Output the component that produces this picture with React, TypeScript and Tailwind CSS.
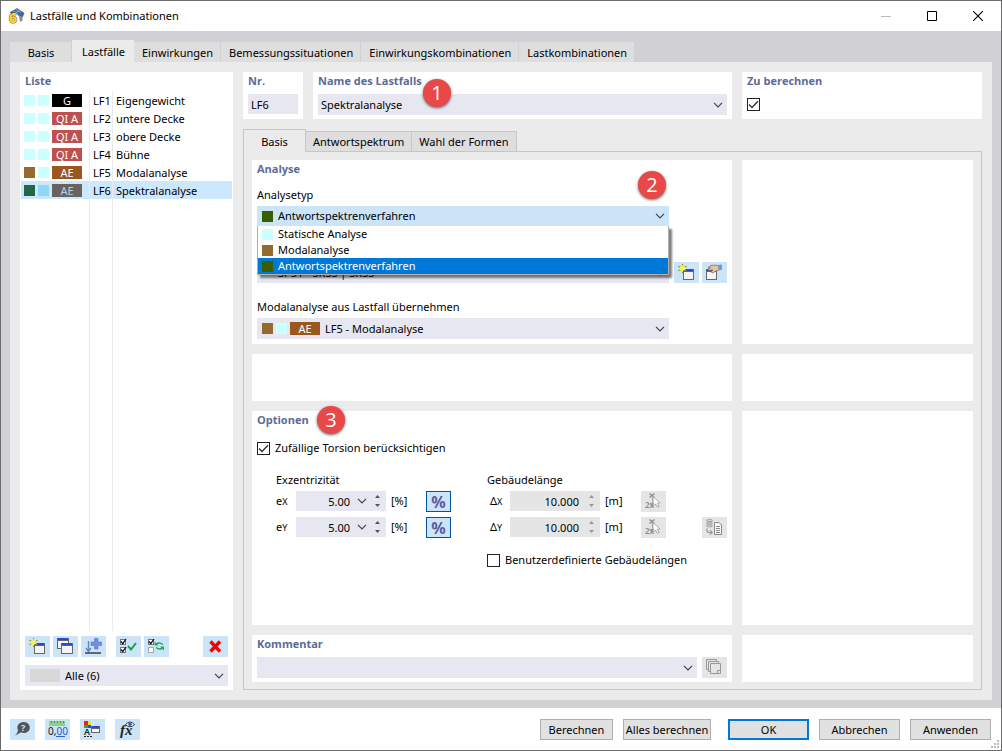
import { useState } from 'react';
import type { ReactNode } from 'react';
import clsx from 'clsx';

const MAIN_TABS = [
  'Basis',
  'Lastfälle',
  'Einwirkungen',
  'Bemessungssituationen',
  'Einwirkungskombinationen',
  'Lastkombinationen',
];

const SUB_TABS = ['Basis', 'Antwortspektrum', 'Wahl der Formen'];

const LOAD_CASES = [
  { id: 'LF1', name: 'Eigengewicht', type: 'bg-[#ccffff]', state: 'bg-[#ccffff]', badge: 'G', badgeStyle: 'bg-black text-white' },
  { id: 'LF2', name: 'untere Decke', type: 'bg-[#ccffff]', state: 'bg-[#ccffff]', badge: 'QI A', badgeStyle: 'bg-[#c0504d] text-white' },
  { id: 'LF3', name: 'obere Decke', type: 'bg-[#ccffff]', state: 'bg-[#ccffff]', badge: 'QI A', badgeStyle: 'bg-[#c0504d] text-white' },
  { id: 'LF4', name: 'Bühne', type: 'bg-[#ccffff]', state: 'bg-[#ccffff]', badge: 'QI A', badgeStyle: 'bg-[#c0504d] text-white' },
  { id: 'LF5', name: 'Modalanalyse', type: 'bg-[#966a2d]', state: 'bg-[#ccffff]', badge: 'AE', badgeStyle: 'bg-[#9c571f] text-white' },
  { id: 'LF6', name: 'Spektralanalyse', type: 'bg-[#236845]', state: 'bg-[#8fd6f7]', badge: 'AE', badgeStyle: 'bg-[#6a625c] text-[#b5d3ee]' },
];

const ANALYSIS_TYPES = [
  { name: 'Statische Analyse', color: 'bg-[#ccffff]' },
  { name: 'Modalanalyse', color: 'bg-[#966a2d]' },
  { name: 'Antwortspektrenverfahren', color: 'bg-[#375f00]' },
];

/* ---------- small building blocks ---------- */

function Card({ title, className, children }: { title?: string; className?: string; children?: ReactNode }) {
  return (
    <section className={clsx('relative bg-white px-[5px]', className)}>
      {title && <h2 className="h-[18px] font-['Open_Sans',sans-serif] font-bold leading-[18px] text-[#5b6b97]">{title}</h2>}
      {children}
    </section>
  );
}

function Chevron({ className }: { className?: string }) {
  return (
    <svg className={clsx('pointer-events-none shrink-0', className)} width="10" height="6" viewBox="0 0 10 6" fill="none" stroke="#444" strokeWidth="1.2">
      <path d="M1 .8 5 4.8 9 .8" />
    </svg>
  );
}

function Swatch({ color }: { color: string }) {
  return <span className={clsx('size-[11px] shrink-0', color)} />;
}

function SelectField({
  id,
  label,
  options,
  className,
  bg = 'bg-[#e7e7f2]',
  children,
}: {
  id: string;
  label: string;
  options: string[];
  className?: string;
  bg?: string;
  children?: ReactNode;
}) {
  return (
    <div className={clsx('relative flex items-center', bg, className)}>
      {children}
      <select id={id} aria-label={label} className="h-full min-w-0 flex-1 appearance-none bg-transparent pr-5 outline-none">
        {options.map((o) => (
          <option key={o}>{o}</option>
        ))}
      </select>
      <Chevron className="absolute right-1" />
    </div>
  );
}

function CheckBox({ id, label, defaultChecked }: { id: string; label: string; defaultChecked?: boolean }) {
  return (
    <span className="grid size-[13px] shrink-0">
      <input
        id={id}
        aria-label={label}
        type="checkbox"
        defaultChecked={defaultChecked}
        className="peer col-start-1 row-start-1 size-[13px] appearance-none border border-[#222] bg-white"
      />
      <svg className="pointer-events-none invisible col-start-1 row-start-1 peer-checked:visible" width="13" height="13" viewBox="0 0 13 13" fill="none" stroke="#333" strokeWidth="1.4">
        <path d="M2 6.5 5 9.5 11 3.2" />
      </svg>
    </span>
  );
}

function ToolButton({ label, disabled, className, children }: { label: string; disabled?: boolean; className?: string; children: ReactNode }) {
  return (
    <button
      type="button"
      title={label}
      aria-label={label}
      disabled={disabled}
      className={clsx('h-[21px] w-[25px] shrink-0', disabled ? 'bg-[#e5e5e5]' : 'bg-[#cce4f7]', className)}
    >
      <svg width="25" height="21" viewBox="0 0 25 21" fill="none">
        {children}
      </svg>
    </button>
  );
}

function Spinner({ disabled }: { disabled?: boolean }) {
  return (
    <svg className="shrink-0" width="5" height="12" viewBox="0 0 5 12" fill={disabled ? '#999' : '#555'}>
      <path d="M0 3 2.5 0 5 3ZM0 9 2.5 12 5 9Z" />
    </svg>
  );
}

function NumberField({ id, value, disabled }: { id: string; value: string; disabled?: boolean }) {
  return (
    <div className={clsx('flex h-5 w-[90px] items-center pr-[6px]', disabled ? 'bg-[#e5e5e5]' : 'bg-[#e7e7f2]')}>
      <input id={id} defaultValue={value} disabled={disabled} className="h-full min-w-0 flex-1 bg-transparent text-right outline-none" />
      {!disabled && <Chevron className="ml-[7px]" />}
      <span className={disabled ? 'ml-[10px]' : 'ml-[8px]'}>
        <Spinner disabled={disabled} />
      </span>
    </div>
  );
}

function Marker({ n, className }: { n: number; className: string }) {
  return (
    <span
      className={clsx(
        "absolute z-20 flex size-7 items-center justify-center rounded-full bg-[#e84848] font-['Open_Sans',sans-serif] text-[20px] leading-none text-white shadow-[0_1px_3px_rgba(0,0,0,0.6)]",
        className
      )}
    >
      {n}
    </span>
  );
}

/* ---------- icon drawings, 25x21 ---------- */

function MiniWindow({ x, y, w = 10, h = 9 }: { x: number; y: number; w?: number; h?: number }) {
  return (
    <g shapeRendering="crispEdges">
      <rect x={x} y={y} width={w + 1} height={h + 1} fill="#666" />
      <rect x={x + 1} y={y} width={w - 1} height="2" fill="#2c45e0" />
      <rect x={x + 1} y={y + 3} width={w - 1} height={h - 3} fill="#f4f4f4" />
    </g>
  );
}

function NewIcon() {
  return (
    <>
      <MiniWindow x={9} y={7} w={10} h={10} />
      <path d="M8.5 2v9M4.5 4.2l8 4.6M12.5 4.2l-8 4.6" stroke="#77772a" strokeWidth="1.1" />
      <path d="m8.5 2.6 1 2.3 2.7-.4-1.7 2 1.7 2-2.7-.4-1 2.3-1-2.3-2.7.4 1.7-2-1.7-2 2.7.4Z" fill="#ffff1e" />
    </>
  );
}

function CopyIcon() {
  return (
    <>
      <MiniWindow x={4} y={2} w={11} h={10} />
      <MiniWindow x={8} y={7} w={11} h={10} />
    </>
  );
}

function ImportIcon() {
  return (
    <>
      <path d="M13.5 2.5h3.5v3.5h3.5v3.5H17V13h-3.5V9.5H10V6h3.5Z" fill="#6f8fe0" stroke="#5874c8" strokeWidth=".6" />
      <path d="M7.5 5v10M5 12l2.5 3.5L10 12" stroke="#5c86c4" strokeWidth="1.4" />
      <path d="M4 17h16" stroke="#333" strokeWidth="1.4" />
    </>
  );
}

function TinyCheck({ y, checked = true }: { y: number; checked?: boolean }) {
  return (
    <>
      <rect x="4.5" y={y + 0.5} width="5" height="5" fill="#fff" stroke={checked ? '#777' : '#aaa'} />
      {checked && <path d={`M5 ${y + 2.5} 6.8 ${y + 4.6} 10 ${y}`} stroke="#111" strokeWidth="1.3" />}
    </>
  );
}

function DeleteIcon() {
  return <path d="M7.5 5.5 17 15.5M17 5.5 7.5 15.5" stroke="#f50000" strokeWidth="3.4" />;
}

function EditIcon() {
  return (
    <>
      <MiniWindow x={4} y={7} w={10} h={10} />
      <path d="M6 5.5 9 3.5l5-.5 3 1.5v3.5l-4 1.5-2 1.5-2-1 2-2-4.5.3-.5-1.3 2.5-1Z" fill="#e7c3a0" stroke="#7d6450" strokeWidth=".7" />
      <path d="M15.5 3 20 2.5v5l-2.5 1Z" fill="#6f9bd4" />
    </>
  );
}

function PickIcon() {
  return (
    <>
      <path d="m8.5 2.5 5 4M13.5 2.5l-5 4" stroke="#888" strokeWidth="1.2" />
      <path d="M11.5 5v7L9 13.5M14 13l4.5 2.5" stroke="#aaa" />
      <path d="m12 5.5 7 6.5-2.8.3 1.8 3-1.7.9-1.7-3.1L12 15Z" fill="#fff" stroke="#999" strokeWidth=".8" />
      <text x="4" y="17" fontSize="8" fontWeight="600" fill="#888">2x</text>
    </>
  );
}

function DatabaseIcon() {
  return (
    <>
      <g fill="#ccc" stroke="#999" strokeWidth=".8">
        <ellipse cx="7.5" cy="8.8" rx="3" ry="1.2" />
        <ellipse cx="7.5" cy="6.2" rx="3" ry="1.2" />
        <ellipse cx="7.5" cy="3.6" rx="3" ry="1.2" />
      </g>
      <path d="M5 11.5v2q0 2 2.5 2H10M8 13.2l2.2 2.3L8 17.6" stroke="#999" strokeWidth="1.2" />
      <path d="M12.5 5.5h4.5l2.5 2.5v9.5h-7z" fill="#f8f8f8" stroke="#888" />
      <path d="M14 9.5h4M14 11.5h4M14 13.5h4M14 15.5h4" stroke="#888" />
    </>
  );
}

function PagesIcon() {
  return (
    <g fill="#e5e5e5" stroke="#999">
      <path d="M4.5 2.5h10v10h-10z" />
      <path d="M6.5 4.5h10v10h-10z" />
      <path d="M8.5 6.5h10v10h-10z" />
      <path d="M15.5 16.5v-3h3" />
    </g>
  );
}

function PercentButton({ label }: { label: string }) {
  return (
    <button type="button" aria-label={label} className="ml-5 flex h-[21px] w-[25px] items-center justify-center border border-[#00559b] bg-[#cce4f7] text-[16px] font-bold leading-none text-[#5a5aa0]">
      %
    </button>
  );
}

function AppLogo() {
  return (
    <svg className="overflow-visible" width="16" height="16" viewBox="0 0 16 16">
      <path d="M2 4.5 9 .5l7 4.5-1.5 4-3.5-1L9 5.5 4 6Z" fill="#3e68a8" stroke="#39506e" strokeWidth=".6" />
      <path d="m5 3 5 2M8 1.5l5 3M12 2.5 7 5" stroke="#9cb9dd" strokeWidth=".7" />
      <path d="m11 7.5 3.5 1v4l-2.5 1.5Z" fill="#8a8a8a" />
      <text x="1" y="15" fontSize="14" fontWeight="700" fill="#ffd42e" stroke="#6e5a1a" strokeWidth="1" paintOrder="stroke">6</text>
    </svg>
  );
}

/* ---------- page parts ---------- */

function TitleBar() {
  return (
    <header className="flex h-[30px] items-center bg-white pl-[7px] pr-[18px] text-black">
      <AppLogo />
      <h1 className="ml-[6px] flex-1 font-normal">Lastfälle und Kombinationen</h1>
      <div className="flex items-center gap-9">
        <button type="button" aria-label="Minimieren">
          <svg width="10" height="10" viewBox="0 0 10 10" stroke="#bbb"><path d="M0 5.5h10" /></svg>
        </button>
        <button type="button" aria-label="Maximieren">
          <svg width="10" height="10" viewBox="0 0 10 10" fill="none" stroke="#000"><path d="M.5.5h9v9h-9z" /></svg>
        </button>
        <button type="button" aria-label="Schließen">
          <svg width="10" height="10" viewBox="0 0 10 10" stroke="#000" strokeWidth="1.1"><path d="m0 0 10 10M10 0 0 10" /></svg>
        </button>
      </div>
    </header>
  );
}

function LoadCaseList() {
  const [selected, setSelected] = useState('LF6');

  return (
    <aside className="flex w-[213px] shrink-0 flex-col bg-white">
      <h2 className="h-[19px] pl-[5px] font-['Open_Sans',sans-serif] font-bold leading-[18px] text-[#5b6b97]">Liste</h2>
      <div className="flex flex-1 px-px">
        <table className="w-full table-fixed border-separate border-spacing-0">
          <colgroup>
            <col className="w-[69px]" />
            <col className="w-[23px]" />
            <col />
          </colgroup>
          <tbody>
            {LOAD_CASES.map((lc) => (
              <tr key={lc.id} onClick={() => setSelected(lc.id)} className={clsx('h-[18px]', selected === lc.id && 'bg-[#cce8ff]')}>
                <td className="border-r border-[#ebebeb] p-0">
                  <div className="flex items-center gap-[3px] pl-[3px]">
                    <Swatch color={lc.type} />
                    <Swatch color={lc.state} />
                    <span className={clsx('h-[13px] w-[30px] text-center leading-[13px]', lc.badgeStyle)}>{lc.badge}</span>
                  </div>
                </td>
                <td className="border-r border-[#ebebeb] p-0 pl-[3px] pt-[2px] leading-4">{lc.id}</td>
                <td className="p-0 pl-[3px] pt-[2px] leading-4">{lc.name}</td>
              </tr>
            ))}
            <tr>
              <td className="border-r border-[#ebebeb] p-0" />
              <td className="border-r border-[#ebebeb] p-0" />
              <td className="p-0" />
            </tr>
          </tbody>
        </table>
      </div>
      <div className="mt-[5px] flex gap-[3px] px-[5px]">
        <ToolButton label="Neu"><NewIcon /></ToolButton>
        <ToolButton label="Kopieren"><CopyIcon /></ToolButton>
        <ToolButton label="Importieren"><ImportIcon /></ToolButton>
        <ToolButton label="Alle auswählen" className="ml-[7px]">
          <TinyCheck y={3} />
          <TinyCheck y={11} />
          <path d="m12 10 3 3.5L20 7" stroke="#13a04a" strokeWidth="2" />
        </ToolButton>
        <ToolButton label="Auswahl umkehren">
          <TinyCheck y={3} />
          <TinyCheck y={11} checked={false} />
          <path d="M19 8.5q-3.5-2.5-7-.5M12 11.5q3.5 2.5 7 .5" stroke="#2aa35a" strokeWidth="1.5" />
          <path d="M10.5 5.5v4h4zM20 14.5v-4h-4z" fill="#2aa35a" />
        </ToolButton>
        <ToolButton label="Löschen" className="ml-auto"><DeleteIcon /></ToolButton>
      </div>
      <SelectField id="filter" label="Filter" options={['Alle (6)']} className="mx-[5px] mb-1 mt-2 h-[21px] gap-[5px] pl-[5px]">
        <span className="h-[13px] w-[30px] shrink-0 bg-[#d8d8d8]" />
      </SelectField>
    </aside>
  );
}

function AnalysisCard() {
  const [type, setType] = useState('Antwortspektrenverfahren');

  return (
    <Card title="Analyse" className="pb-[5px]">
      <Marker n={2} className="left-[386px] top-[11px]" />
      <label htmlFor="analysetyp" className="mt-[9px] block h-4 leading-4">Analysetyp</label>
      <div className="relative mr-[58px] mt-[3px]">
        <SelectField id="analysetyp" label="Analysetyp" options={[type]} bg="bg-[#cce4f7]" className="h-5 gap-[5px] pl-[5px]">
          <Swatch color="bg-[#375f00]" />
        </SelectField>
        <ul role="listbox" aria-label="Analysetyp" className="absolute inset-x-0 top-full z-10 border border-t-0 border-[#b0b0b0] bg-white shadow-[3px_3px_2px_rgba(0,0,0,0.5)]">
          {ANALYSIS_TYPES.map((t) => (
            <li
              key={t.name}
              role="option"
              aria-selected={t.name === type}
              onClick={() => setType(t.name)}
              className={clsx('flex h-4 items-center gap-[5px] pl-1 leading-4', t.name === type && 'bg-[#0078d7] text-white')}
            >
              <Swatch color={t.color} />
              {t.name}
            </li>
          ))}
        </ul>
      </div>
      <div className="mt-9 flex">
        <SelectField id="spektral" label="Spektralanalyse-Einstellungen" options={['SP51 - SRSS | SRSS']} className="mr-[5px] h-[21px] flex-1 gap-[5px] pl-[5px]">
          <Swatch color="bg-[#ccffff]" />
        </SelectField>
        <ToolButton label="Neu" className="mr-[3px]"><NewIcon /></ToolButton>
        <ToolButton label="Bearbeiten"><EditIcon /></ToolButton>
      </div>
      <label htmlFor="modal" className="mt-4 block h-4 leading-4">Modalanalyse aus Lastfall übernehmen</label>
      <SelectField id="modal" label="Modalanalyse aus Lastfall übernehmen" options={['LF5 - Modalanalyse']} className="mr-[58px] mt-[3px] h-[21px] gap-[3px] pl-[5px]">
        <Swatch color="bg-[#966a2d]" />
        <Swatch color="bg-[#ccffff]" />
        <span className="mr-[2px] h-[13px] w-[30px] shrink-0 bg-[#9c571f] text-center leading-[13px] text-white">AE</span>
      </SelectField>
    </Card>
  );
}

function OptionsCard() {
  return (
    <Card title="Optionen">
      <Marker n={3} className="-top-[5px] left-[65px]" />
      <div className="mt-[11px] flex h-4 items-center gap-[5px]">
        <CheckBox id="torsion" label="Zufällige Torsion berücksichtigen" defaultChecked />
        <label htmlFor="torsion">Zufällige Torsion berücksichtigen</label>
      </div>
      <div className="mt-[14px] flex pl-[19px]">
        <div className="w-[211px] shrink-0">
          <h3 className="h-[21px] leading-5">Exzentrizität</h3>
          {['X', 'Y'].map((axis) => (
            <div key={axis} className="mb-[5px] flex h-[21px] items-start leading-5">
              <label htmlFor={`e-${axis}`} className="w-5">
                e<span className="text-[9px]">{axis}</span>
              </label>
              <NumberField id={`e-${axis}`} value="5.00" />
              <span className="ml-[5px] w-[15px]">[%]</span>
              <PercentButton label={`Prozent ${axis}`} />
            </div>
          ))}
        </div>
        <div className="flex-1">
          <h3 className="h-[21px] leading-5">Gebäudelänge</h3>
          {['X', 'Y'].map((axis) => (
            <div key={axis} className="mb-[5px] flex h-[21px] items-start leading-5">
              <label htmlFor={`d-${axis}`} className="w-[23px] pl-[3px]">
                Δ<span className="text-[9px]">{axis}</span>
              </label>
              <NumberField id={`d-${axis}`} value="10.000" disabled />
              <span className="ml-[5px] w-[36px]">[m]</span>
              <ToolButton label={`Länge ${axis} auswählen`} disabled><PickIcon /></ToolButton>
              {axis === 'Y' && (
                <ToolButton label="Importieren" disabled className="ml-auto"><DatabaseIcon /></ToolButton>
              )}
            </div>
          ))}
          <div className="mt-[14px] flex h-4 items-center gap-[5px]">
            <CheckBox id="custom" label="Benutzerdefinierte Gebäudelängen" />
            <label htmlFor="custom">Benutzerdefinierte Gebäudelängen</label>
          </div>
        </div>
      </div>
    </Card>
  );
}

function Footer() {
  const button = 'h-[21px] border border-[#adadad] bg-[#e1e1e1] text-center leading-[19px]';

  return (
    <footer className="relative flex h-[42px] items-center bg-white pl-[9px] pr-[10px]">
      <div className="flex flex-1 gap-[10px]">
        <ToolButton label="Hilfe">
          <path d="M13.5 3a6 5.5 0 1 1-2.5 10.3Q8 15 5 16.5 8 13.5 8 11A6 5.5 0 0 1 13.5 3Z" fill="#555" />
          <text x="11" y="12" fontSize="9" fontWeight="700" fill="#cce4f7">?</text>
        </ToolButton>
        <ToolButton label="Einheiten">
          <path d="M4 2h16v5H4z" fill="#8fd27f" />
          <path d="M6.5 2v2M9.5 2v2M12.5 2v2M15.5 2v2M18.5 2v2" stroke="#4d9a42" />
          <text x="3" y="16" fontSize="10" fill="#111">0,<tspan fill="#2463d8">00</tspan></text>
          <path d="M11 17.5h9" stroke="#2463d8" />
        </ToolButton>
        <ToolButton label="Darstellung">
          <path d="M4 2h4v4H4z" fill="#f02020" />
          <path d="M8 2h3v4H8z" fill="#f5e020" />
          <path d="M4 6h4v3H4z" fill="#20b030" />
          <path d="M8 6h3v3H8z" fill="#2050e0" />
          <text x="4" y="16" fontSize="9" fontWeight="600" fill="#222">A</text>
          <path d="M4 17.5h8" stroke="#222" strokeDasharray="2 1" />
          <MiniWindow x={11} y={7} w={8} h={6} />
        </ToolButton>
        <ToolButton label="Formel">
          <text x="5" y="16" fontSize="15" fontStyle="italic" fontWeight="700" fill="#222" className="font-['Liberation_Serif',serif]">fx</text>
          <path d="M10.5 5.5q4.5-5 9 0-4.5 4.5-9 0Z" fill="#fff" stroke="#334" />
          <circle cx="15" cy="5.2" r="1.8" fill="#3b56b8" />
        </ToolButton>
      </div>
      <div className="flex gap-[10px]">
        <button type="button" className={clsx(button, 'w-[73px]')}>Berechnen</button>
        <button type="button" className={clsx(button, 'mr-[7px] w-[88px] whitespace-nowrap')}>Alles berechnen</button>
        <button type="button" className="h-[21px] w-[81px] border-2 border-[#0078d7] bg-[#e1e1e1] leading-[17px]">OK</button>
        <button type="button" className={clsx(button, 'w-[81px]')}>Abbrechen</button>
        <button type="button" className={clsx(button, 'w-[81px]')}>Anwenden</button>
      </div>
      <svg className="absolute bottom-[2px] right-[2px]" width="8" height="8" viewBox="0 0 8 8" fill="#bbb">
        <path d="M6 0h2v2H6zM3 3h2v2H3zM6 3h2v2H6zM0 6h2v2H0zM3 6h2v2H3zM6 6h2v2H6z" />
      </svg>
    </footer>
  );
}

export default function App() {
  const [tab, setTab] = useState('Lastfälle');
  const [subTab, setSubTab] = useState('Basis');

  return (
    <div className="flex min-h-screen flex-col border border-[#6b6b6b] bg-[#d1d0d5] font-['Noto_Sans',sans-serif] text-[11px] leading-4 text-black">
      <TitleBar />

      <main className="flex flex-1 flex-col px-[9px] pb-2 pt-[9px]">
        <nav className="flex h-[22px] items-end">
          {MAIN_TABS.map((t) => (
            <button
              key={t}
              type="button"
              onClick={() => setTab(t)}
              className={clsx(
                'min-w-[62px] whitespace-nowrap pl-2 pr-[7px] pt-[2px]',
                t === tab ? 'h-[22px] bg-[#ebebeb]' : 'h-5 border-r border-[#d1d0d5] bg-[#dedede]'
              )}
            >
              {t}
            </button>
          ))}
        </nav>

        <div className="flex flex-1 gap-[10px] bg-[#ebebeb] p-[10px]">
          <LoadCaseList />

          <div className="flex min-w-0 flex-1 flex-col">
            <div className="flex h-[47px] gap-[10px]">
              <Card title="Nr." className="w-[60px]">
                <input aria-label="Nr." defaultValue="LF6" className="mt-1 block h-5 w-full bg-[#e7e7f2] px-[3px] outline-none" />
              </Card>
              <Card title="Name des Lastfalls" className="flex-1">
                <SelectField id="name" label="Name des Lastfalls" options={['Spektralanalyse']} className="mt-1 h-[21px] pl-[3px]" />
                <Marker n={1} className="left-[110px] top-[7px]" />
              </Card>
              <Card title="Zu berechnen" className="w-60">
                <div className="mt-2">
                  <CheckBox id="calc" label="Zu berechnen" defaultChecked />
                </div>
              </Card>
            </div>

            <nav className="mt-[10px] flex h-[22px] items-end">
              {SUB_TABS.map((t) => (
                <button
                  key={t}
                  type="button"
                  onClick={() => setSubTab(t)}
                  className={clsx(
                    'min-w-[63px] whitespace-nowrap border border-[#c5c5d1] px-[7px]',
                    t === subTab ? 'z-10 -mb-px h-[23px] border-b-0 bg-[#ebebeb] pt-[2px]' : '-ml-px h-5 border-b-0 bg-[#dedede]'
                  )}
                >
                  {t}
                </button>
              ))}
            </nav>

            <div className="grid flex-1 grid-cols-[1fr_231px] grid-rows-[184px_47px_1fr_47px] gap-[10px] border border-[#c5c5d1] px-2 pb-[7px] pt-2">
              <AnalysisCard />
              <Card />
              <Card />
              <Card />
              <OptionsCard />
              <Card />
              <Card title="Kommentar">
                <div className="mt-1 flex gap-[5px]">
                  <SelectField id="kommentar" label="Kommentar" options={['']} className="h-[21px] flex-1" />
                  <ToolButton label="Kommentare" disabled><PagesIcon /></ToolButton>
                </div>
              </Card>
              <Card />
            </div>
          </div>
        </div>
      </main>

      <Footer />
    </div>
  );
}
